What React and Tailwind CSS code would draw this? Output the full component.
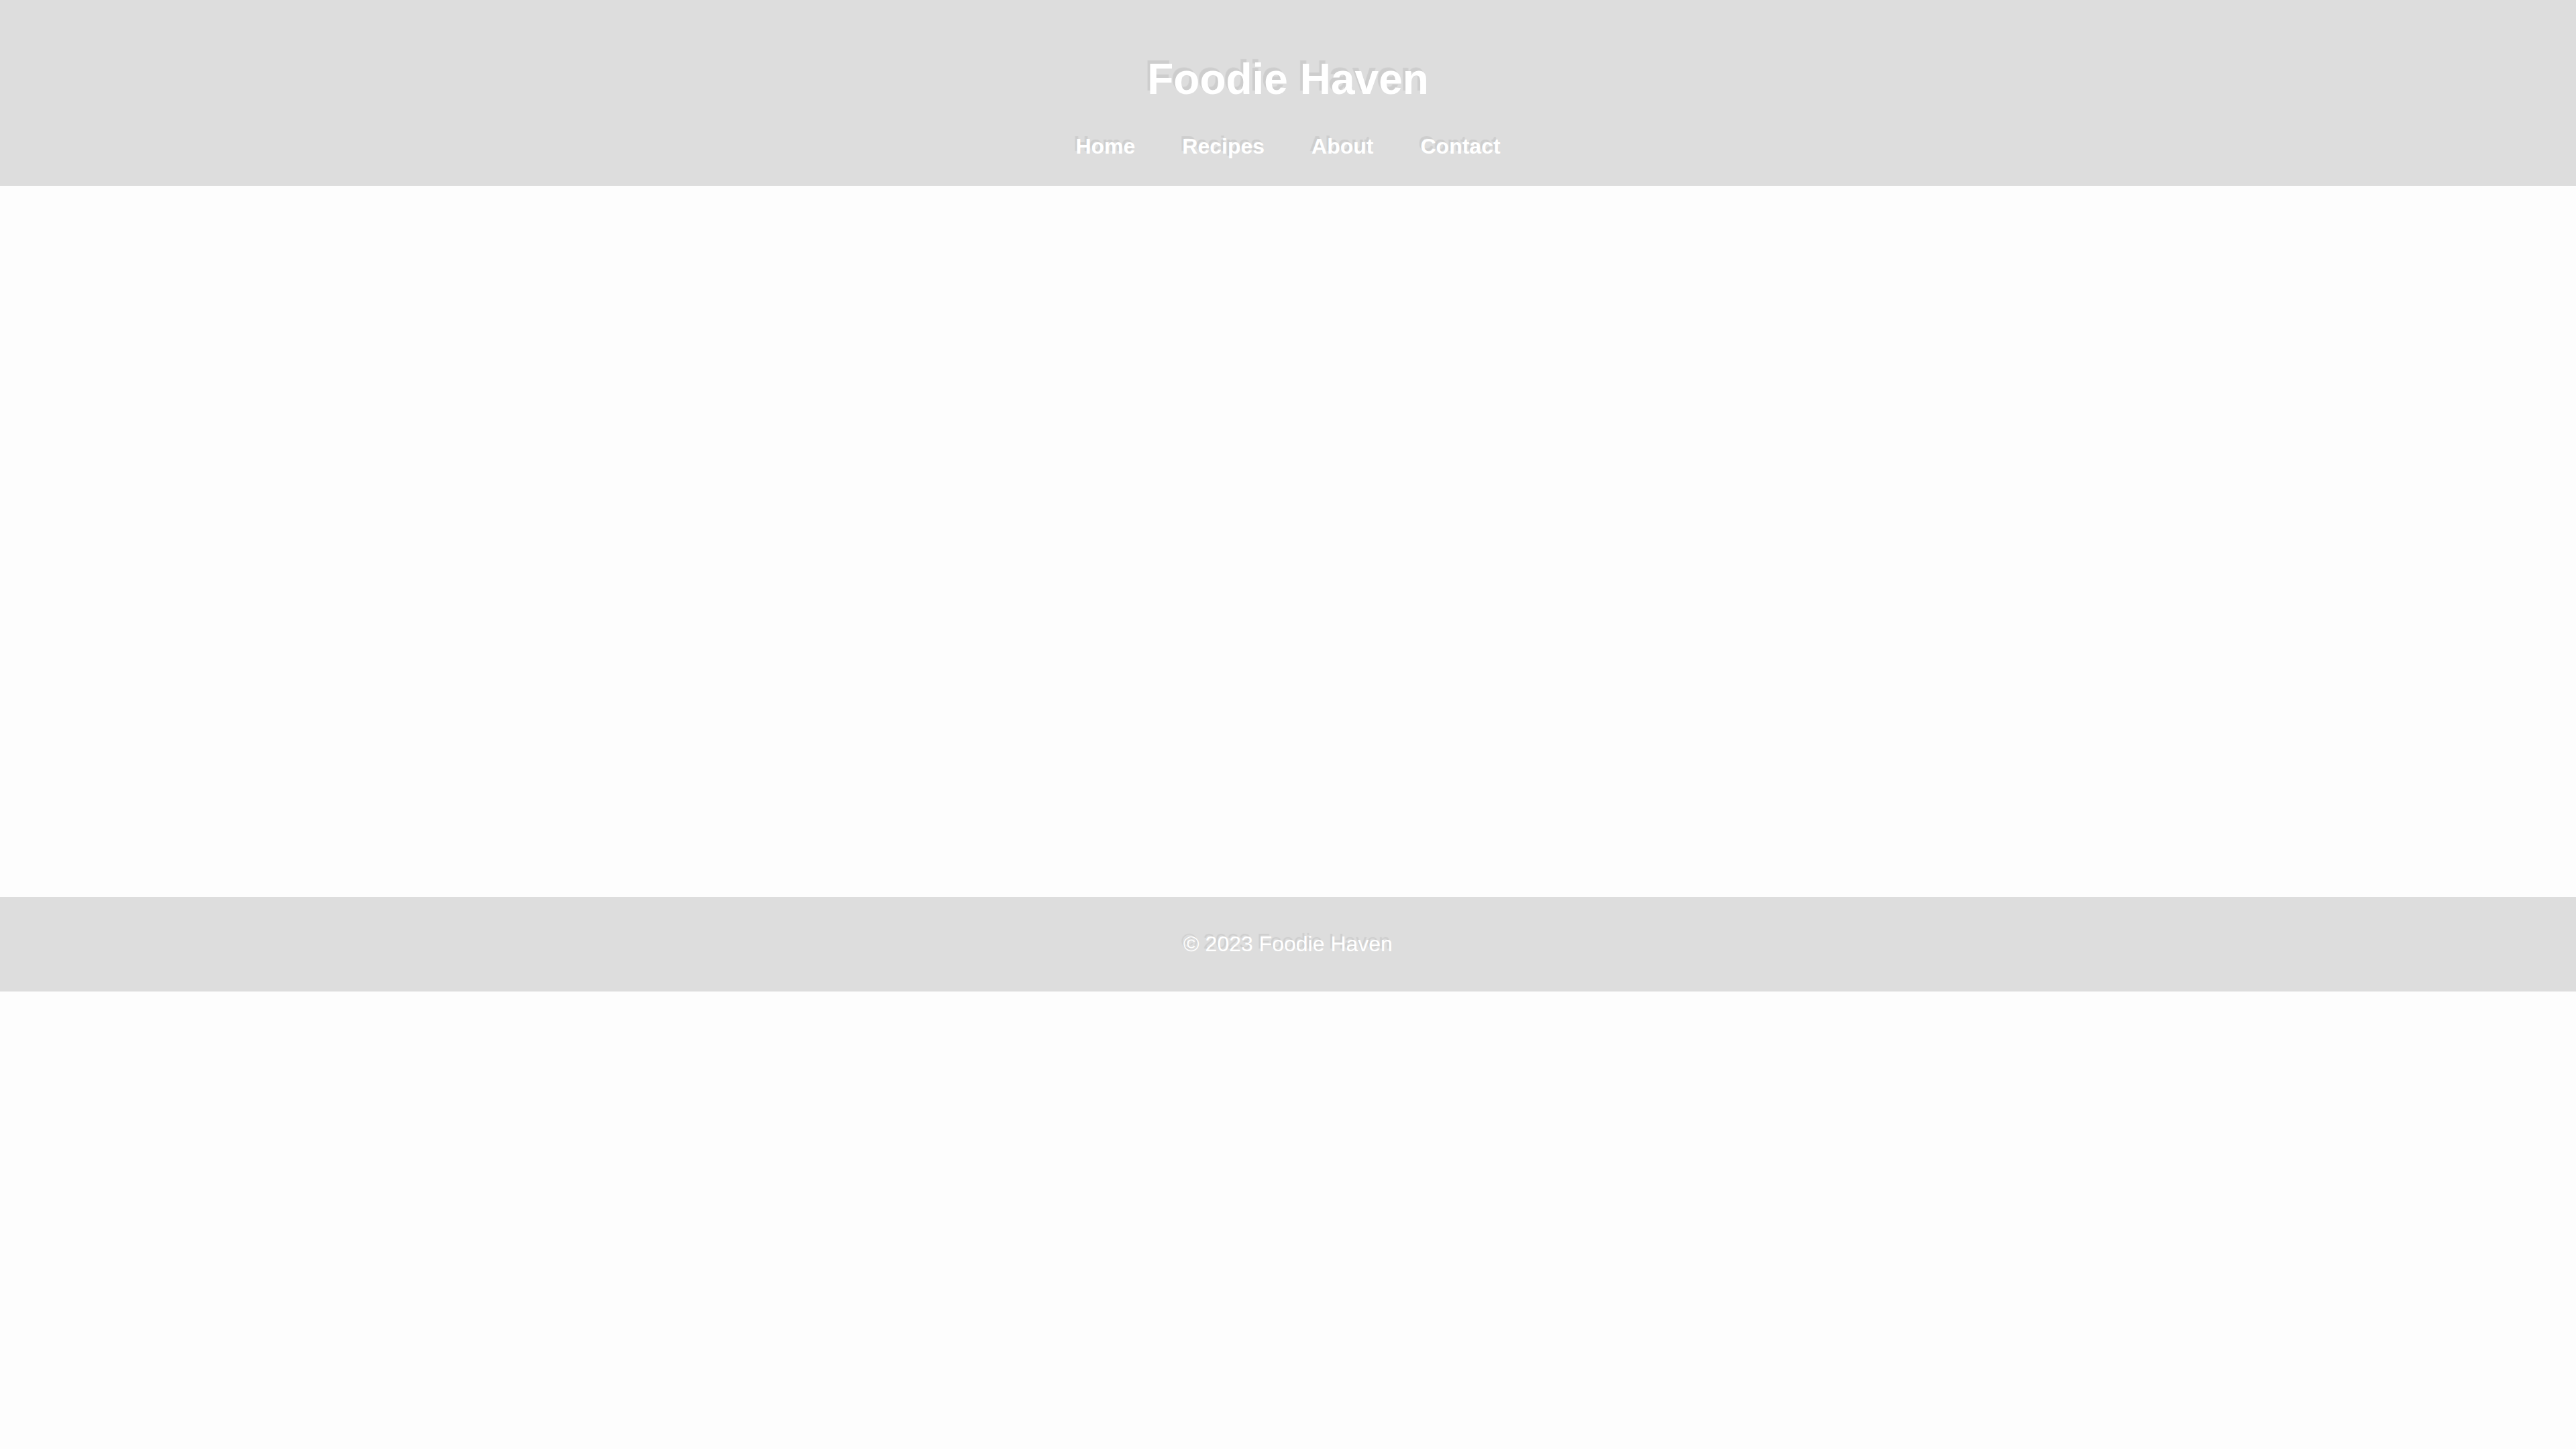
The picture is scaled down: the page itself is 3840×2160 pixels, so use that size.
const navLinks = ['Home', 'Recipes', 'About', 'Contact']

const App = () => {
    return (
        <div className="min-h-screen bg-[#fdfdfd] font-['Liberation_Sans',Arial,sans-serif] text-white">
            <header className="bg-[#dddddd] pt-[81px] pb-[40px] text-center">
                <h1 className="text-[64px] font-bold leading-[74px] [text-shadow:-4px_-5px_1px_rgba(0,0,0,0.07)]">
                    Foodie Haven
                </h1>
                <nav className="mt-[45px] flex justify-center gap-[70px]">
                    {navLinks.map(link => (
                        <a
                            key={link}
                            href="#"
                            className="text-[32px] font-bold leading-[37px] text-white [text-shadow:-3px_-4px_1px_rgba(0,0,0,0.07)]"
                        >
                            {link}
                        </a>
                    ))}
                </nav>
            </header>

            <main className="h-[1060px]" />

            <footer className="bg-[#dddddd] py-[52px] text-center">
                <p className="text-[32px] leading-[37px] [text-shadow:-3px_-4px_1px_rgba(0,0,0,0.07)]">
                    © 2023 Foodie Haven
                </p>
            </footer>
        </div>
    )
}

export default App
